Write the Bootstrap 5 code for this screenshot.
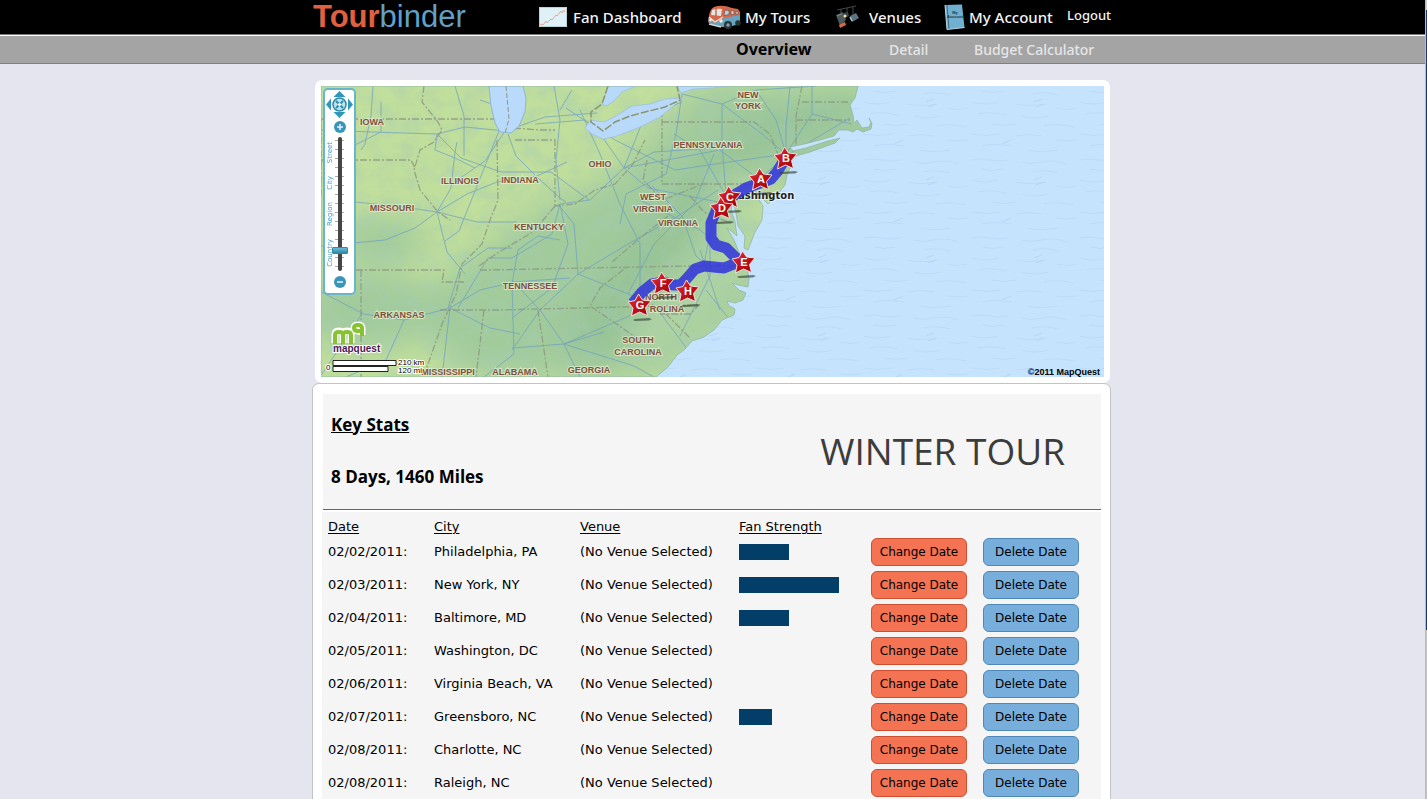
<!DOCTYPE html>
<html lang="en">
<head>
<meta charset="utf-8">
<meta name="viewport" content="width=device-width, initial-scale=1">
<title>Tourbinder - Winter Tour</title>
<link href="https://cdn.jsdelivr.net/npm/bootstrap@5.3.0/dist/css/bootstrap.min.css" rel="stylesheet">
<style>
  html { scrollbar-width: none; }
  body { background: #e5e5ef; color: #000; font-family: "DejaVu Sans", sans-serif; font-size: 13px; }
  a { text-decoration: none; }
  .topbar, .subbar, main { padding-right: 4px; }
  .edge { width: 2px; background: linear-gradient(#cfcfcf 10px, #14398c 10px, #14398c 630px, #c4c4c4 630px); border-left: 1px solid #bbb; }
  .wrap { max-width: 799px; }
  .topbar { background: #000; border-bottom: 1px solid #777; height: 35px; }
  .topbar .wrap { height: 34px; padding-left: 1px; }
  .logo { font: 31px/34px "Liberation Sans", sans-serif; color: #63a0c6; }
  .logo b { color: #e0603f; }
  .mainnav { display: grid; grid-template-columns: 168px 128px 109px 123px 44px; }
  .mainnav a { color: #f4f4f4; font: 500 15px/32px "Noto Sans", sans-serif; white-space: nowrap; }
  .mainnav a.logout { font-size: 13px; line-height: 31px; }
  .icon-slot { width: 34px; }
  .subbar { background: #a4a4a4; border-top: 1px solid #fff; border-bottom: 1px solid #808080; height: 29px; }
  .subnav { display: grid; grid-template-columns: 153px 85px 137px; }
  .subnav a { color: #e6e6e6; font: 500 14px/27px "Noto Sans", sans-serif; white-space: nowrap; }
  .subnav a.active { color: #000; font-weight: 700; font-size: 16px; }
  .mapcard { padding: 6px; border-radius: 7px; background: #fff; margin: 16px 1px 0 3px; }
  .maplabels text { font: bold 9px "Liberation Sans", sans-serif; fill: #80503f; stroke: #e2efd0; stroke-width: 2px; stroke-opacity: .75; paint-order: stroke; text-anchor: middle; }
  .pins text { font: bold 11px "Liberation Sans", sans-serif; fill: #fff; text-anchor: middle; }
  .zoomer { left: 2px; top: 2px; width: 33px; height: 207px; background: #fff; border: 2px solid #6bb5cb; border-radius: 5px; }
  .zoomer button { background: none; border: 0; padding: 0; line-height: 0; display: block; }
  .pan { width: 27px; height: 27px; margin: 1px auto 0; }
  .zbtn { margin: 3px auto 0; }
  .track { height: 137px; margin-top: 3px; }
  .track .names { width: 11px; color: #3d9bc0; font: 7px/11px "DejaVu Sans", sans-serif; height: 137px; }
  .track .names span { writing-mode: vertical-rl; transform: rotate(180deg); }
  .track .ticks { width: 9px; height: 130px; left: 10px; top: 4px; background: repeating-linear-gradient(#aaa 0 1px, transparent 1px 9px); }
  .track input { -webkit-appearance: none; appearance: none; position: absolute; width: 134px; height: 18px; left: -52px; top: 59px; transform: rotate(-90deg); background: none; margin: 0; }
  .track input::-webkit-slider-runnable-track { height: 4px; background: #454545; border-radius: 2px; }
  .track input::-webkit-slider-thumb { -webkit-appearance: none; width: 7px; height: 16px; margin-top: -6px; background: linear-gradient(90deg, #2b8cab, #6dbbd6); border: 1px solid #2b8cab; border-radius: 1px; }
  .tourcard { background: #fff; border: 1px solid #c2c2c8; border-radius: 7px; padding: 10px 9px 10px 9px; }
  .stats { background: #f5f5f5; border-bottom: 1px solid #666; margin: 0 0 2px 1px; height: 116px; padding: 0 36px 2px 8px; font: 700 17px/24px "Open Sans", sans-serif; }
  .stats h2, .stats p { font: inherit; margin: 0; }
  .stats h1 { font: 500 37px/48px "Open Sans", sans-serif; color: #3c3c3c; margin: 0; }
  .dates { width: 100%; table-layout: fixed; background: #f5f5f5; }
  .dates th { font-weight: 400; text-decoration: underline; text-underline-offset: 2px; height: 23px; padding: 6px 0 0; line-height: 17px; }
  .dates td { height: 33px; padding: 0; }
  .dates th:first-child, .dates td:first-child { padding-left: 6px; }
  .dates tr > * { white-space: nowrap; vertical-align: middle; }
  .strength { height: 16px; background: #023e68; }
  .datebtn { width: 96px; height: 28px; padding: 0; border-radius: 6px; font-size: 12px; line-height: 26px; color: #000; display: block; }
  .chg { background: #f37352; border: 1px solid #cd4f30; }
  .del { background: #77aedb; border: 1px solid #4d88b9; }
</style>
</head>
<body>
<header>
  <div class="topbar">
    <div class="wrap mx-auto d-flex justify-content-between">
      <a class="logo" href="#"><b>Tour</b>binder</a>
      <nav class="mainnav" aria-label="Main">
        <a class="d-flex align-items-center" href="#"><span class="icon-slot d-flex"><svg width="28" height="20" viewBox="0 0 28 20"><path d="M0 0h28v20H0z" fill="#dff0f6"/><path d="M.5.500h27v19H.5z" fill="none" stroke="#b9d3dc"/><path d="M1 18l2-1 1 1 3-4 1 2 4-4 1 1 4-5 1 1 4-5 1 2 2-3 1 2" fill="none" stroke="#e8a899"/></svg></span>Fan Dashboard</a>
        <a class="d-flex align-items-center" href="#"><span class="icon-slot d-flex me-1"><svg width="34" height="25" viewBox="0 0 34 25"><path d="M2 11Q3 4 7 2q8-3 18 1l6 1 2 3v10l-3 3-15 2-10-2-4-3z" fill="#d5674b"/><path d="M1 13l7 5 9-5 16-3v8l-8 3-8 1-11-2-4-2z" fill="#66a3bf"/><path d="M5 5q6-2 10-1l-1 7-10-1z" fill="#e9e4dc"/><path d="M9 4v7" stroke="#8b4436"/><path d="M18 5l4 .5v4l-5 1zM24 5.500l3 .3v3.500l-3 .4zM29 6l2 .5v3l-2 .3z" fill="#bdd0d2" stroke="#6a4a44" stroke-width=".6"/><path d="M2 12l6 5 8-5" fill="none" stroke="#eee8df" stroke-width="1.200"/><circle cx="3.500" cy="15" r="1.400" fill="#f5e9d2"/><circle cx="14" cy="16" r="1.700" fill="#f5e9d2"/><path d="M2 19l12 3" stroke="#d8d3cb" stroke-width="1.500"/><circle cx="21" cy="20" r="4" fill="#27343a"/><circle cx="21" cy="20" r="1.700" fill="#8fa2a8"/><circle cx="31" cy="18" r="2.800" fill="#27343a"/></svg></span>My Tours</a>
        <a class="d-flex align-items-center" href="#"><span class="icon-slot d-flex"><svg width="24" height="24" viewBox="0 0 24 24"><path d="M2 5L21 1M6 4v6M18 2v9M12 3v5" stroke="#41484b" fill="none"/><path d="M1 10l7-3 3 8-6 6z" fill="#4d585b"/><path d="M2 11l5-2" stroke="#7d898c"/><path d="M4 20l6-3 1 3-6 3z" fill="#d7694d"/><path d="M8 8l5-1 1 4-4 2z" fill="#3b4244"/><circle cx="10" cy="11" r="1.500" fill="#e9e6a0"/><path d="M15 11l6-3 3 5-7 4z" fill="#5d7480"/><path d="M15 12l2 4" stroke="#a9c4d1" stroke-width="1.500"/></svg></span>Venues</a>
        <a class="d-flex align-items-center" href="#"><span class="d-flex me-1"><svg width="21" height="26" viewBox="0 0 21 26"><path d="M1 1l17-.5 2.500 23L3 25.500z" fill="#6fb0d0"/><path d="M1 1l2 24.500M3 25.500l17.500-2" stroke="#b9d7e2" fill="none"/><path d="M3 1l2 24" stroke="#3b6d87" fill="none"/><g font-family="Liberation Sans" font-size="4" font-weight="bold" fill="#173646" text-anchor="middle"><text x="11" y="10">My</text><text x="11" y="14">Account</text></g></svg></span>My Account</a>
        <a class="logout" href="#">Logout</a>
      </nav>
    </div>
  </div>
  <div class="subbar">
    <div class="wrap mx-auto d-flex justify-content-end">
      <nav class="subnav" aria-label="Tour">
        <a class="active" href="#" aria-current="page">Overview</a>
        <a href="#">Detail</a>
        <a href="#">Budget Calculator</a>
      </nav>
    </div>
  </div>
</header>

<main>
  <div class="wrap mx-auto">
  <section class="mapcard" aria-label="Route map">
    <div class="position-relative">
      <svg class="d-block w-100" viewBox="321 86 783 291">
        <defs>
          <pattern id="waves" width="108" height="78" patternUnits="userSpaceOnUse">
            <path d="M0 4q9-2 18 0t18 0M50 6q9 3 20 0t24 2M10 13q10 3 22 0M60 16q12-3 26 1M0 24q14 4 26 0M44 26q12 3 30 0M84 30q10 3 20 0M6 36q12-3 28 1M50 38q12 4 26 0M20 46q12 3 24 0M72 48q12-3 30 1M0 56q14 3 28 0M44 58q12-3 26 0M84 62q10 2 20 0M10 68q12-3 30 0M56 72q12 3 30 0" fill="none" stroke="#aed2f2"/>
            <path d="M62 24l8-3M64 29l8-3M30 66l9-4" stroke="#9fc8ec"/>
          </pattern>
          <filter id="soft" x="-30%" y="-30%" width="160%" height="160%"><feGaussianBlur stdDeviation="14"/></filter>
          <filter id="relief" x="0" y="0" width="100%" height="100%"><feTurbulence type="fractalNoise" baseFrequency=".05 .06" numOctaves="5" seed="8"/><feColorMatrix values="0 0 0 0 .38  0 0 0 0 .6  0 0 0 0 .46  1.800 0 0 0 -.72"/></filter>
          <clipPath id="landclip"><path id="land" d="M321 86H858L855 98 850 105 853 115 854 123 857 120 862 128 869 127 871 122 869 118 872 124 871 129 863 132 857 129 853 132 848 130 839 130 834 136 820 140 804 144 790 147 793 151 806 148 828 141 840 138 835 143 810 152 796 156 791 159 791 166 787 175 785 185 776 196 768 204 763 199 765 194 758 191 755 187 759 200 763 206 762 220 755 232 748 250 744 248 745 236 738 226 736 212 733 202 731 210 735 222 737 236 730 230 727 228 734 240 738 250 742 258 746 264 749 278 748 287 738 285 732 283 739 290 746 293 743 300 735 303 727 301 729 306 735 309 734 315 722 320 714 330 704 337 692 341 684 350 677 355 668 367 656 377H321z"/></clipPath>
          <linearGradient id="red" x1="0" y1="0" x2="1" y2="1"><stop offset="0" stop-color="#e8353b"/><stop offset=".5" stop-color="#c01118"/><stop offset="1" stop-color="#8f060c"/></linearGradient>
          <g id="star"><path d="M-5 14l14-1 3 1-3 1.500-14 .5-2-1z" fill="#2d3a2d" opacity=".6"/><path d="M-1.500-11L2.500-5 11-4 5.500 2.500 7.500 10.500-.5 7-8.500 11-7 3-12-3-5-4.500z" fill="url(#red)" stroke="#f2dede" stroke-linejoin="round"/></g>
        </defs>
        <path d="M321 86h783v291H321z" fill="#c5e3fd"/>
        <path d="M321 86h783v291H321z" fill="url(#waves)" opacity=".5"/>
        <g clip-path="url(#landclip)">
          <path d="M321 86h783v291H321z" fill="#c0de9c"/>
          <g filter="url(#soft)" fill="#a2cb9c">
            <ellipse cx="370" cy="310" rx="70" ry="38"/><ellipse cx="380" cy="240" rx="46" ry="22"/>
            <path d="M400 310L540 210 610 180 700 86H900V160L740 190 760 300 650 377H470z"/>
            <path d="M560 330L640 220 740 120 860 86V110L740 170 670 270 600 377z" fill="#98c497"/>
          </g>
          <path d="M620 377l80-50 60-60-10-100-30 10-20 80-60 50z" fill="#bddca8" opacity=".5" filter="url(#soft)"/>
          <path d="M321 86h560v291H321z" filter="url(#relief)" opacity=".5"/>
          <g fill="none" stroke="#6d9ec4" stroke-width=".9" opacity=".8">
            <path d="M373 86l-2 30-6 28-4 6M321 130l50 2 66 2 28-7 40 4 40-14 52-4M321 162l60-30 0-30M356 202l54 6 27 4 40 10 40 0M437 212l14-24 4-36 2-10M437 212l30-18 30-12 40-6 30-14M437 212l-22 16-30 12-64 6M437 212l10 40 18 22M437 134l24 24 40 14 50 0 38 28M455 86l9 30 0 40M480 100l30 10 0 10M437 134l-2 16 20 8 20 10"/>
            <path d="M505 131l-20 30-32 22M499 131l-20 50-20 50-14 10M508 134l8 22 22 22 22 20 6 4M560 200l-4-40 4-40-6-34M516 86l0 44M535 124l50-4 30 20 60 30 40-6 70-10M560 110l12-20M560 204l-8 30-40 24-24 0-30 50M560 204l30-4 34-32 30-16 60-4M560 204l8 40-16 44-40 30M512 284l6-34 20-14 22 4M450 308l-8 69M450 308l-46 12-40-6-43-22M450 308l30-18 34-8 56-4M450 308l40 20 30 6M362 314l-40 60M404 320l-18 40-40 17M448 308l12-40 28-20 24 0"/>
            <path d="M512 284l2 70-30 23M512 348l52-4 40-12M540 310l-28 40M540 310l24 34 16 33M540 310l38-36 50-30 50-28 40-26M540 310l-28-30M578 274l-4-50-16-20M578 274l50 20 30 16 30 40M564 344l70-30 36-30 50-20M564 344l70 22 20 11M628 294l26-50 40-40 20-50M640 304l0-60-20-40-20-50-20-44M670 284l34-20 12-60M700 250l20 60M706 290l24 30M624 168l24 20 70 14 40-22 28-24 0-30 4-40M624 168l-28-40-30-20M624 168l20-50 38-16M682 94l40 10 34-14 60-4M682 94l-6 40-10 40-40 20-6 30M722 104l0 40 4 50M722 104l40 30 26 22M756 90l20 30 10 34M786 154l26-40 0-28M812 114l40 10M786 156l30-18 34-20M728 200l-28-50-26-16M760 180l-40-30-96 18M640 200l60 30 12 10M712 206l-2 40 0 30-30 60M744 262l-28 10-20-16-14-40-30-30"/>
          </g>
          <g fill="none" stroke="#8d9983" stroke-width="1.300" stroke-dasharray="7 2 2 2" opacity=".85">
            <path d="M321 119h78l36 0 80 0M321 160h90l4 8M424 86l-2 16 16 20 4 8-8 12-14 8-6 20 6 20 18 22 12 8M497 140l1 60-8 20-8 24-20 20-6 30-14 30-16 46M515 140h40v66l20-2 20-14 20-6 18-20 12-24M514 128l26 2h15M356 270h88l-2 12h22M480 270h8l200-4h56M440 310l58 0 82-2 120-3 M484 310l-8 67M538 310l10 67M555 206l-22 26-34 20-20 14M662 106v78h108M662 122h92l16 12 8 20M640 340l-50-34 10-18 28-22M647 160l-4 20 20 20 40-16M668 216l-28 22-28 24M321 196v-76M361 270l0 107M700 304l-10 10-30 0M644 300l20 12 26 26M802 86l-6 30 0 30M802 102h46M796 120h54M690 196l14 16 24 10"/>
          </g>
          <path d="M489 86l2 20 4 17 5 9 11 1 8-7 6-14 1-14-3-12z" fill="#b9dafa" stroke="#8eb4d5"/><path d="M506 86l3 33-4 14" fill="none" stroke="#8c968a" stroke-dasharray="5 2"/>
          <path d="M683 98L660 117 640 127 617 136 603 139 592 134 585 128 591 120 604 122 616 116 632 106 650 104 665 99zM608 86L602 104 606 106 614 101 622 92 636 86zM677 86l4 7 12-4 20-1 14-2z" fill="#b9d9fb" stroke="#9cc0de" stroke-width=".8"/>
          <path d="M608 86L602 104 591 112 591 122 603 131 615 122 630 116 645 112 665 107 680 100 677 86" fill="none" stroke="#8b956a" stroke-width="1.500" stroke-dasharray="8 2"/>
        </g>
        <use href="#land" fill="none" stroke="#8fb8a9" stroke-width=".8"/>
        <g class="maplabels">
          <text x="372" y="125">IOWA</text><text x="460" y="184">ILLINOIS</text><text x="520" y="183">INDIANA</text><text x="392" y="211">MISSOURI</text><text x="539" y="230">KENTUCKY</text><text x="530" y="289">TENNESSEE</text><text x="399" y="318">ARKANSAS</text><text x="448" y="375">MISSISSIPPI</text><text x="515" y="375">ALABAMA</text><text x="589" y="373">GEORGIA</text><text x="600" y="167">OHIO</text><text x="748" y="98">NEW</text><text x="748" y="109">YORK</text><text x="708" y="148">PENNSYLVANIA</text><text x="653" y="200">WEST</text><text x="653" y="212">VIRGINIA</text><text x="678" y="226">VIRGINIA</text><text x="661" y="300">NORTH</text><text x="667" y="312">ROLINA</text><text x="638" y="343">SOUTH</text><text x="638" y="355">CAROLINA</text>
        </g>
        <text x="738" y="199" font-family="DejaVu Sans" font-weight="bold" font-size="10" fill="#222" stroke="#fff" stroke-width="2" stroke-opacity=".6" paint-order="stroke">ashington</text>
        <path d="M785 159l-8 13-6 7-11 4-14 5-10 6-10 7-10 10-5 12 0 15 5 7 10 3 9 9 8 6-9 1-10 4-20-2-9 3-6 7-8 9-8 0-9-3-12 2-10 8-9 11" fill="none" stroke="#3437db" stroke-width="11" stroke-linejoin="round" opacity=".88"/>
        <g class="pins">
          <use href="#star" x="786" y="158"/><text x="786" y="162">B</text>
          <use href="#star" x="761" y="179"/><text x="761" y="183">A</text>
          <use href="#star" x="730" y="197"/><text x="730" y="201">C</text>
          <use href="#star" x="722" y="208"/><text x="722" y="212">D</text>
          <use href="#star" x="744" y="262"/><text x="744" y="266">E</text>
          <use href="#star" x="663" y="283"/><text x="663" y="287">F</text>
          <use href="#star" x="688" y="291"/><text x="688" y="295">H</text>
          <use href="#star" x="640" y="305"/><text x="640" y="309">G</text>
        </g>
        <g stroke-linejoin="round" fill="none">
          <path d="M335 343v-9q0-3 4-3t4 3v9m0-9q0-3 4-3t4 3v9M362 335v-7q0-3-4-3t-4 3 4 3h5" stroke="#fff" stroke-width="7"/>
          <path d="M335 344v-9q0-3 4-3t4 3v9m0-9q0-3 4-3t4 3v9M362 336v-8q0-3-4-3t-4 3 4 3h5" stroke="#86c232" stroke-width="4"/>
        </g>
        <text x="333" y="352" font-family="Liberation Sans" font-size="10" font-weight="bold" fill="#4b1a55" stroke="#fff" stroke-width="2" paint-order="stroke">mapquest</text>
        <path d="M333 360.500h63v5h-63zM333 366.500h55v5h-55z" fill="#fff" stroke="#222"/>
        <g font-family="Liberation Sans" font-size="8" fill="#000" stroke="#fff" stroke-width="2" paint-order="stroke"><text x="326" y="370">0</text><text x="398" y="365">210 km</text><text x="398" y="373">120 mi</text></g>
        <text x="1100" y="375" text-anchor="end" font-family="Liberation Sans" font-weight="bold" font-size="9">©2011 MapQuest</text>
      </svg>
      <div class="zoomer position-absolute">
        <button class="pan" type="button" aria-label="Pan map"><svg width="27" height="27" viewBox="0 0 27 27"><g fill="#3197ba"><path d="M13.500 0l6 6h-12zM13.500 27l6-6h-12zM0 13.500l5-6v12zM27 13.500l-5-6v12z"/></g><circle cx="13.500" cy="13.500" r="6.500" fill="#bfe0ec" stroke="#2b8cab" stroke-width="1.500"/><path d="M10 10l7 7M17 10l-7 7" stroke="#2b8cab" stroke-width="1.800"/><circle cx="13.500" cy="13.500" r="1.500" fill="#fff"/></svg></button>
        <button class="zbtn" type="button" aria-label="Zoom in"><svg width="12" height="12" viewBox="0 0 12 12"><circle cx="6" cy="6" r="6" fill="#3a96b8"/><path d="M3 6h6M6 3v6" stroke="#e5f5fb" stroke-width="1.500"/></svg></button>
        <div class="track position-relative">
          <div class="names d-flex flex-column justify-content-around align-items-center"><span>Street</span><span>City</span><span>Region</span><span>Country</span></div>
          <div class="ticks position-absolute"></div>
          <input type="range" min="0" max="15" value="2" aria-label="Zoom level">
        </div>
        <button class="zbtn" type="button" aria-label="Zoom out"><svg width="12" height="12" viewBox="0 0 12 12"><circle cx="6" cy="6" r="6" fill="#3a96b8"/><path d="M3 6h6" stroke="#e5f5fb" stroke-width="1.500"/></svg></button>
      </div>
    </div>
  </section>

  <section class="tourcard">
    <div class="stats d-flex justify-content-between align-items-center">
      <div><h2 class="text-decoration-underline mb-4 pb-1">Key Stats</h2><p>8 Days, 1460 Miles</p></div>
      <h1>WINTER TOUR</h1>
    </div>
    <table class="dates">
      <colgroup><col style="width:112px"><col style="width:146px"><col style="width:159px"><col style="width:132px"><col style="width:112px"><col></colgroup>
      <thead><tr><th scope="col">Date</th><th scope="col">City</th><th scope="col">Venue</th><th scope="col">Fan Strength</th><th></th><th></th></tr></thead>
      <tbody>
        <tr><td>02/02/2011:</td><td>Philadelphia, PA</td><td>(No Venue Selected)</td><td><div class="strength" style="width:50px"></div></td><td><button class="btn datebtn chg" type="button">Change Date</button></td><td><button class="btn datebtn del" type="button">Delete Date</button></td></tr>
        <tr><td>02/03/2011:</td><td>New York, NY</td><td>(No Venue Selected)</td><td><div class="strength" style="width:100px"></div></td><td><button class="btn datebtn chg" type="button">Change Date</button></td><td><button class="btn datebtn del" type="button">Delete Date</button></td></tr>
        <tr><td>02/04/2011:</td><td>Baltimore, MD</td><td>(No Venue Selected)</td><td><div class="strength" style="width:50px"></div></td><td><button class="btn datebtn chg" type="button">Change Date</button></td><td><button class="btn datebtn del" type="button">Delete Date</button></td></tr>
        <tr><td>02/05/2011:</td><td>Washington, DC</td><td>(No Venue Selected)</td><td></td><td><button class="btn datebtn chg" type="button">Change Date</button></td><td><button class="btn datebtn del" type="button">Delete Date</button></td></tr>
        <tr><td>02/06/2011:</td><td>Virginia Beach, VA</td><td>(No Venue Selected)</td><td></td><td><button class="btn datebtn chg" type="button">Change Date</button></td><td><button class="btn datebtn del" type="button">Delete Date</button></td></tr>
        <tr><td>02/07/2011:</td><td>Greensboro, NC</td><td>(No Venue Selected)</td><td><div class="strength" style="width:33px"></div></td><td><button class="btn datebtn chg" type="button">Change Date</button></td><td><button class="btn datebtn del" type="button">Delete Date</button></td></tr>
        <tr><td>02/08/2011:</td><td>Charlotte, NC</td><td>(No Venue Selected)</td><td></td><td><button class="btn datebtn chg" type="button">Change Date</button></td><td><button class="btn datebtn del" type="button">Delete Date</button></td></tr>
        <tr><td>02/08/2011:</td><td>Raleigh, NC</td><td>(No Venue Selected)</td><td></td><td><button class="btn datebtn chg" type="button">Change Date</button></td><td><button class="btn datebtn del" type="button">Delete Date</button></td></tr>
      </tbody>
    </table>
  </section>
  </div>
</main>
<div class="edge position-fixed top-0 end-0 h-100" aria-hidden="true"></div>
<script src="https://cdn.jsdelivr.net/npm/bootstrap@5.3.0/dist/js/bootstrap.bundle.min.js"></script>
</body>
</html>
